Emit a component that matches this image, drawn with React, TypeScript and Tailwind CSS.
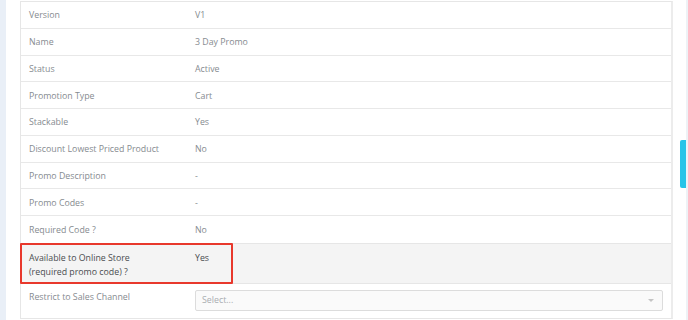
import React from "react";

const rows: [string, string][] = [
  ["Version", "V1"],
  ["Name", "3 Day Promo"],
  ["Status", "Active"],
  ["Promotion Type", "Cart"],
  ["Stackable", "Yes"],
  ["Discount Lowest Priced Product", "No"],
  ["Promo Description", "-"],
  ["Promo Codes", "-"],
  ["Required Code ?", "No"],
];

export default function App() {
  return (
    <div
      className="w-[688px] h-[320px] bg-white flex overflow-hidden relative"
      style={{ fontFamily: '"Open Sans", "Noto Sans", sans-serif' }}
    >
      <div className="w-[6px] h-full bg-[#e9eff7]" />
      <div className="w-[14px]" />
      <div className="w-[653px] mt-[1px] border border-[#e6e6e6] border-r-2 border-r-[#ececec] self-start text-[8.8px] text-[#868b90]">
        {rows.map(([k, v], i) => (
          <div
            key={k}
            className={`flex items-center pt-[2px] h-[26.78px] ${i < rows.length - 1 ? "border-b" : ""} border-[#e8e8e8]`}
          >
            <div className="w-[174px] pl-[8px]">{k}</div>
            <div>{v}</div>
          </div>
        ))}
        <div className="relative flex h-[41px] bg-[#f4f4f4] border-y border-[#e6e6e6] text-[#4a4d50] leading-[14px] pt-[7px]">
          <div className="w-[174px] pl-[8px]">
            Available to Online Store
            <br />
            (required promo code) ?
          </div>
          <div>Yes</div>
          <div className="absolute left-[-1px] top-[-1px] w-[213px] h-[41px] border-2 border-[#e8382c] rounded-[1px]" />
        </div>
        <div className="flex h-[34px] pt-[6px]">
          <div className="w-[174px] pl-[8px] leading-[14px]">Restrict to Sales Channel</div>
          <div className="w-[468px] h-[21px] border border-[#dcdcdc] rounded-[2px] bg-[#fafafa] flex items-center justify-between px-[6px] text-[#a9adb1]">
            <span>Select...</span>
            <svg width="6" height="3" viewBox="0 0 6 3" className="mr-[2px]">
              <path d="M0 0 L6 0 L3 3 Z" fill="#c4c4c4" />
            </svg>
          </div>
        </div>
      </div>
      <div className="absolute right-0 top-[140px] w-[8px] h-[48px] bg-[#27c4e8] rounded-l-[2px]" />
      <div className="absolute right-[0px] top-0 w-[2px] h-full bg-[#eef2f6]" />
    </div>
  );
}
